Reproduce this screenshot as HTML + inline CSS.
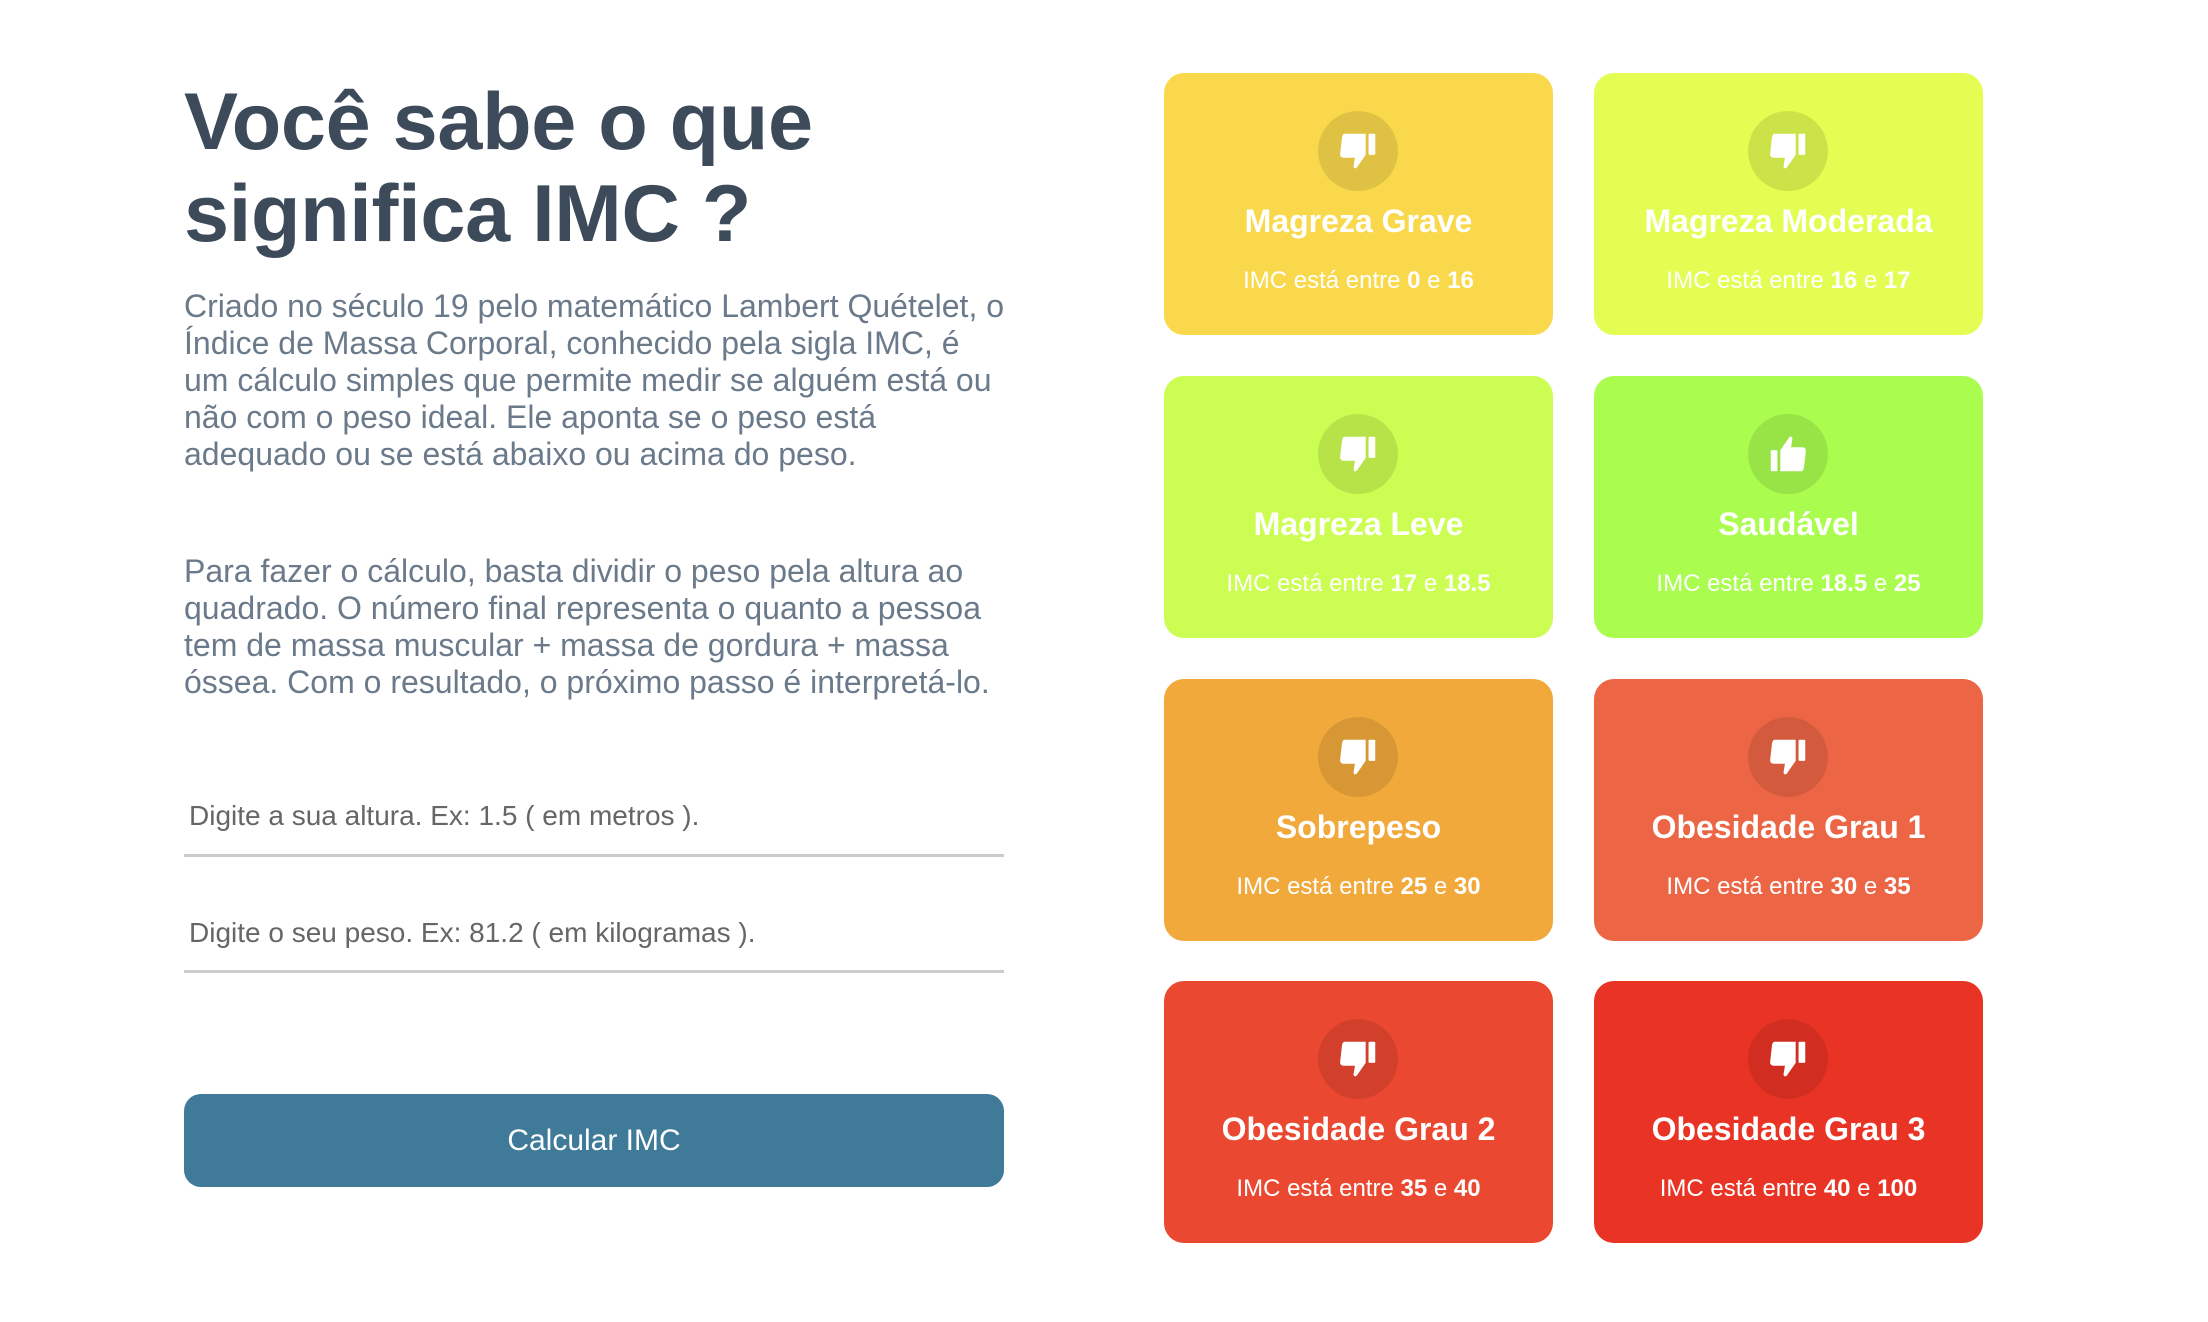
<!DOCTYPE html>
<html><head><meta charset="utf-8">
<style>
*{margin:0;padding:0;box-sizing:border-box}
body{width:2208px;height:1322px;background:#fff;font-family:"Liberation Sans",sans-serif;position:relative;overflow:hidden}
h1{position:absolute;left:184px;top:76px;font-size:81px;line-height:92px;font-weight:bold;color:#3d4a5a;letter-spacing:-0.3px}
.p{position:absolute;left:184px;width:900px;font-size:32px;line-height:37px;color:#6b7a8a;white-space:nowrap}
.inp{position:absolute;left:184px;width:820px;height:3px;background:#ccc}
.ph{position:absolute;left:189px;font-size:28px;color:#666}
.btn{position:absolute;left:184px;top:1094px;width:820px;height:93px;border-radius:17px;background:#3f7a99;color:#fff;font-size:30px;text-align:center;line-height:93px}
.card{position:absolute;width:389px;height:262px;border-radius:20px;color:#fff;text-align:center}
.ic{position:absolute;left:154px;top:38px;width:80px;height:80px;border-radius:50%;background:rgba(0,0,0,0.1)}
.ic svg{position:absolute;left:17px;top:17px;width:46px;height:46px}
.t{position:absolute;left:0;right:0;top:126px;font-size:32px;font-weight:bold;line-height:44px}
.s{position:absolute;left:0;right:0;top:193px;font-size:24px;line-height:30px}
</style></head><body>
<h1>Você sabe o que<br>significa IMC ?</h1>
<div class="p" style="top:288px">Criado no século 19 pelo matemático Lambert Quételet, o<br>Índice de Massa Corporal, conhecido pela sigla IMC, é<br>um cálculo simples que permite medir se alguém está ou<br>não com o peso ideal. Ele aponta se o peso está<br>adequado ou se está abaixo ou acima do peso.</div>
<div class="p" style="top:553px">Para fazer o cálculo, basta dividir o peso pela altura ao<br>quadrado. O número final representa o quanto a pessoa<br>tem de massa muscular + massa de gordura + massa<br>óssea. Com o resultado, o próximo passo é interpretá-lo.</div>
<div class="ph" style="top:800px">Digite a sua altura. Ex: 1.5 ( em metros ).</div>
<div class="inp" style="top:854px"></div>
<div class="ph" style="top:917px">Digite o seu peso. Ex: 81.2 ( em kilogramas ).</div>
<div class="inp" style="top:970px"></div>
<div class="btn">Calcular IMC</div>

<svg width="0" height="0" style="position:absolute"><defs>
<g id="down"><rect x="17.5" y="3" width="3.5" height="11" rx="0.5" fill="#fff"/><path d="M5 3h11v11l-4.5 6.5c-.8 1-2 .5-1.8-.6l.7-4.4H4.5c-1.3 0-2-1-1.8-2.2l.8-7C3.7 4 4.2 3 5 3z" fill="#fff"/></g>
</defs></svg>

<div class="card" style="left:1164px;top:73px;background:#f9d94b"><div class="ic"><svg viewBox="0 0 24 24"><use href="#down"/></svg></div><div class="t">Magreza Grave</div><div class="s">IMC está entre <b>0</b> e <b>16</b></div></div>
<div class="card" style="left:1594px;top:73px;background:#e3fd52"><div class="ic"><svg viewBox="0 0 24 24"><use href="#down"/></svg></div><div class="t">Magreza Moderada</div><div class="s">IMC está entre <b>16</b> e <b>17</b></div></div>
<div class="card" style="left:1164px;top:376px;background:#ccfd52"><div class="ic"><svg viewBox="0 0 24 24"><use href="#down"/></svg></div><div class="t">Magreza Leve</div><div class="s">IMC está entre <b>17</b> e <b>18.5</b></div></div>
<div class="card" style="left:1594px;top:376px;background:#aafd4e"><div class="ic"><svg viewBox="0 0 24 24"><g transform="rotate(180 12 12)"><use href="#down"/></g></svg></div><div class="t">Saudável</div><div class="s">IMC está entre <b>18.5</b> e <b>25</b></div></div>
<div class="card" style="left:1164px;top:679px;background:#f0a93a"><div class="ic"><svg viewBox="0 0 24 24"><use href="#down"/></svg></div><div class="t">Sobrepeso</div><div class="s">IMC está entre <b>25</b> e <b>30</b></div></div>
<div class="card" style="left:1594px;top:679px;background:#ec6544"><div class="ic"><svg viewBox="0 0 24 24"><use href="#down"/></svg></div><div class="t">Obesidade Grau 1</div><div class="s">IMC está entre <b>30</b> e <b>35</b></div></div>
<div class="card" style="left:1164px;top:981px;background:#ea4830"><div class="ic"><svg viewBox="0 0 24 24"><use href="#down"/></svg></div><div class="t">Obesidade Grau 2</div><div class="s">IMC está entre <b>35</b> e <b>40</b></div></div>
<div class="card" style="left:1594px;top:981px;background:#e93425"><div class="ic"><svg viewBox="0 0 24 24"><use href="#down"/></svg></div><div class="t">Obesidade Grau 3</div><div class="s">IMC está entre <b>40</b> e <b>100</b></div></div>
</body></html>
